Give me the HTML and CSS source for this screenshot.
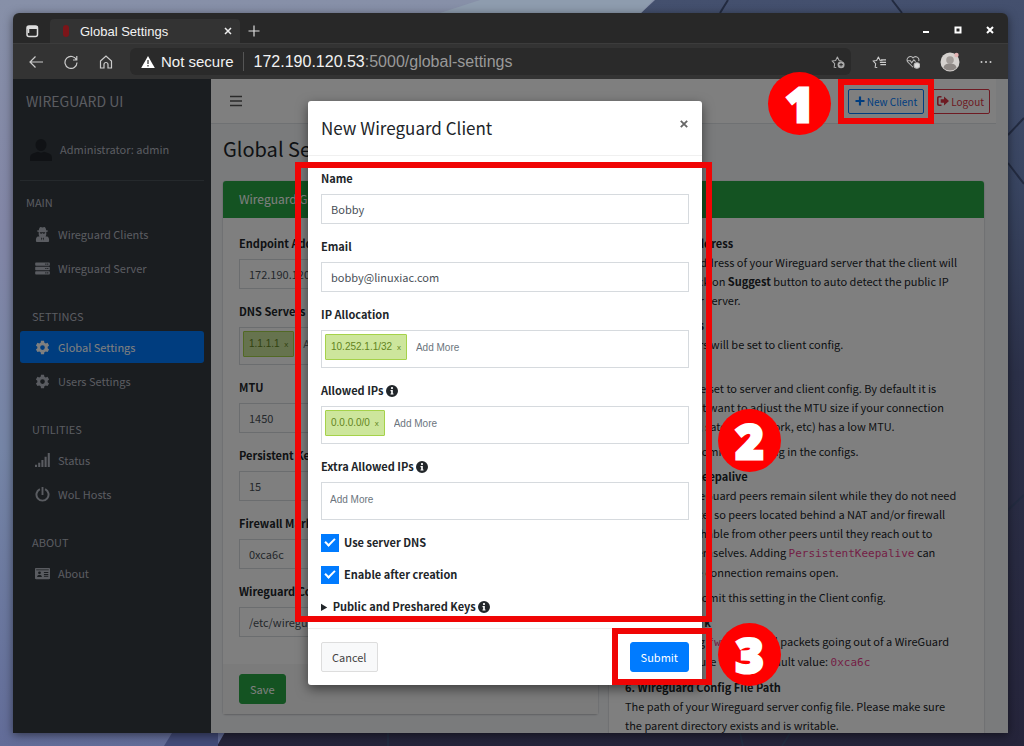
FILE: index.html
```html
<!DOCTYPE html>
<html lang="en">
<head>
<meta charset="utf-8">
<title>Global Settings</title>
<link rel="stylesheet" href="styles.css">
</head>
<body>
<svg class="defs" aria-hidden="true">
  <symbol id="cog" viewBox="0 0 16 16"><path fill-rule="evenodd" d="M6.4 0h3.2l.4 2 1.5.8 1.9-.7 1.6 2.8-1.5 1.3v1.7l1.5 1.3-1.6 2.8-1.9-.7-1.5.9-.4 2H6.4l-.4-2-1.5-.9-1.9.7L1 9.2l1.500-1.300V6.200L1 4.900l1.600-2.800 1.900.7L6 2zM8 4.700a2.500 2.500 0 1 0 0 5 2.500 2.500 0 0 0 0-5z" transform="translate(0 .9)"/></symbol>
  <symbol id="server" viewBox="0 0 16 16"><path fill-rule="evenodd" d="M1 1.500h14a.8.8 0 0 1 .8.8v2a.8.8 0 0 1-.8.8H1a.8.8 0 0 1-.8-.8v-2a.8.8 0 0 1 .8-.8zM11 2.700v1.200h1.200V2.700zm2 0v1.200h1.200V2.700zM1 6.200h14a.8.8 0 0 1 .8.8v2a.8.8 0 0 1-.8.800H1A.8.8 0 0 1 .2 9V7A.8.8 0 0 1 1 6.200zm10 1.200v1.200h1.200V7.400zm2 0v1.200h1.200V7.400zM1 10.900h14a.8.8 0 0 1 .8.800v2a.8.8 0 0 1-.8.800H1a.8.8 0 0 1-.8-.8v-2a.8.8 0 0 1 .8-.8zm10 1.200v1.200h1.200v-1.200zm2 0v1.200h1.200v-1.200z"/></symbol>
  <symbol id="secret" viewBox="0 0 16 16"><path fill-rule="evenodd" d="M6 0c.8 0 1.300.5 2 .5S9.200 0 10 0c1 0 1.600 1.800 2 3.400 1.300.2 2 .5 2 .9s-.8.700-2 1c.1 1.800.2 3-.4 3.900l-.3.8h1.800c1.200.6 1.900 1.800 1.900 3.400V15a1 1 0 0 1-1 1H2a1 1 0 0 1-1-1v-1.600c0-1.600.7-2.800 1.900-3.400h1.800l-.3-.8C3.800 8.300 3.900 7.100 4 5.300c-1.200-.3-2-.6-2-1s.8-.7 2-.9C4.400 1.800 5 0 6 0zM5 5.700c.2 1 .6 1.500 1.400 1.500S7.500 6.800 8 6.300c.5.5.8.900 1.600.9S10.800 6.700 11 5.700zM6.300 11l.8 3.500.6-2.300zm3.400 0-1.400 1.200.6 2.300z"/></symbol>
  <symbol id="signal" viewBox="0 0 16 16"><path d="M0 12.500h2.200V15H0zm3.400-2h2.200V15H3.400zm3.400-3H9V15H6.800zm3.400-3.500h2.200v11h-2.200zM13.600 0h2.200v15h-2.200z"/></symbol>
  <symbol id="power" viewBox="0 0 16 16"><path d="M7 0h2v8.500H7zM11.300 1.300A7.500 7.500 0 1 1 4.700 1.300l1 1.900a5.400 5.400 0 1 0 4.600 0z"/></symbol>
  <symbol id="card" viewBox="0 0 16 14"><path fill-rule="evenodd" d="M1.200 1h13.600c.7 0 1.200.4 1.200 1v10c0 .6-.5 1-1.200 1H1.200C.5 13 0 12.600 0 12V2c0-.6.500-1 1.200-1zM1.300 2.600v1h13.400v-1zM4.800 4.800a1.500 1.500 0 1 0 0 3 1.500 1.500 0 0 0 0-3zM2.300 10.600h5c0-1.300-.8-2-2.500-2s-2.500.7-2.500 2zM9.500 5.500v1h4.700v-1zm0 2v1h4.700v-1zm0 2v1h4.700v-1z"/></symbol>
  <symbol id="info" viewBox="0 0 16 16"><path fill-rule="evenodd" d="M8 0a8 8 0 1 1 0 16A8 8 0 0 1 8 0zm0 2.600a1.500 1.500 0 1 0 0 3 1.500 1.500 0 0 0 0-3zM6 6.600v1.600h.9v3H6v1.600h4v-1.600h-.9V6.600z"/></symbol>
  <symbol id="user" viewBox="0 0 20 20"><path d="M10 0a5 5 0 0 1 5 5.300C15 8.500 12.800 11 10 11S5 8.500 5 5.300A5 5 0 0 1 10 0zM7 11.500l3 1 3-1 4.500 1.600c1.500.6 2.500 2 2.500 4V20H0v-2.900c0-2 1-3.400 2.500-4z"/></symbol>
  <symbol id="star" viewBox="0 0 16 16"><path fill="none" stroke="currentColor" stroke-width="1.200" stroke-linejoin="round" d="M6 14.200 3.600 14l.6-4.200-3-3 4.100-.6 2-4 2 4 2.700.4"/></symbol>
</svg>
<div class="desktop">
  <svg class="wallpaper" viewBox="0 0 1024 746" preserveAspectRatio="none" aria-hidden="true">
    <defs>
      <linearGradient id="sky" x1="0" y1="0" x2="0" y2="1"><stop offset="0" stop-color="#8790a8"/><stop offset=".3" stop-color="#8286a6"/><stop offset=".6" stop-color="#7585a6"/><stop offset="1" stop-color="#626c98"/></linearGradient>
      <linearGradient id="slate" x1="0" y1="0" x2="0" y2="1"><stop offset="0" stop-color="#44506e"/><stop offset=".25" stop-color="#384460"/><stop offset=".5" stop-color="#2b3048"/><stop offset="1" stop-color="#25243a"/></linearGradient>
    </defs>
    <rect width="1024" height="746" fill="url(#slate)"/>
    <path fill="url(#sky)" d="M0 0h655l-14 13L217 746H0z"/>
    <path fill="#92a1b0" d="M480 0h173l-12 13H440z" opacity=".7"/>
    <path fill="#424b78" d="M172 733h46v13h-54z"/>
    <path fill="none" stroke="#232b40" stroke-width="2" d="M728 0l-8 13M892 0l10 13M1008 135l16-17M1008 163l16 21M1008 510l16-15M388 733v13M740 733l3 13M790 733l-8 13"/>
  </svg>
  <main class="window">
    <div class="tabstrip">
      <svg class="i14" viewBox="0 0 14 14" fill="none" stroke="#ddd" stroke-width="1.500"><rect x="2" y="2" width="10.500" height="10.500" rx="2"/><path stroke-width="3" d="M2 3.500h10.500"/><path d="M3.500 5v4"/></svg>
      <div class="tab"><i class="favicon"></i><span>Global Settings</span><button class="plain" aria-label="Close tab"><svg class="i8" viewBox="0 0 8 8" stroke="#eee" stroke-width="1.500"><path d="M1 1l6 6M7 1 1 7"/></svg></button></div>
      <button class="plain" aria-label="New tab"><svg class="i12" viewBox="0 0 12 12" stroke="#ddd" stroke-width="1.200"><path d="M6 .5v11M.5 6h11"/></svg></button>
      <div class="controls">
        <button class="plain" aria-label="Minimize"><svg class="i8" viewBox="0 0 8 8" stroke="#fff" stroke-width="2"><path d="M1 6h6"/></svg></button>
        <button class="plain" aria-label="Maximize"><svg class="i8" viewBox="0 0 8 8" stroke="#fff" stroke-width="2" fill="none"><rect x="1.500" y="1.500" width="5" height="5"/></svg></button>
        <button class="plain" aria-label="Close"><svg class="i8" viewBox="0 0 8 8" stroke="#fff" stroke-width="2"><path d="M1 1l6 6M7 1 1 7"/></svg></button>
      </div>
    </div>
    <div class="toolbar">
      <button class="plain" aria-label="Back"><svg class="i14" viewBox="0 0 14 14" fill="none" stroke="#ccc" stroke-width="1.200"><path d="M14 7H1M6.500 1.500 1 7l5.500 5.500"/></svg></button>
      <button class="plain" aria-label="Reload"><svg class="i14" viewBox="0 0 14 14" fill="none" stroke="#ccc" stroke-width="1.200"><path d="M12.500 5A6 6 0 1 0 13 7.500M12.800 1v4H9"/></svg></button>
      <button class="plain" aria-label="Home"><svg class="i14" viewBox="0 0 14 14" fill="none" stroke="#ccc" stroke-width="1.200"><path d="M1.500 6 7 1l5.500 5v7H9V9.500a2 2 0 0 0-4 0V13H1.500z"/></svg></button>
      <div class="address">
        <svg class="i14" viewBox="0 0 14 14"><path fill="#fff" d="M7 1l6.800 12H.2z"/><path stroke="#555" stroke-width="1.500" d="M7 5v4M7 10v1.500"/></svg>
        <span class="secure">Not secure</span><span class="url"><b>172.190.120.53</b>:5000/global-settings</span>
        <svg class="i14 fav" viewBox="0 0 16 16"><use href="#star"/><circle cx="11.500" cy="11" r="4" fill="#aaa"/><path stroke="#333" stroke-width="1.200" d="M11.500 9v4M9.500 11h4"/></svg>
      </div>
      <div class="tools">
        <svg class="i14" viewBox="0 0 16 16"><use href="#star"/><path stroke="#ccc" stroke-width="1.300" d="M9 8.500h7M9.500 11h6.500M10 5.500h6"/></svg>
        <svg class="i14" viewBox="0 0 16 16" fill="none" stroke="#bbb" stroke-width="1.200"><path d="M8 14 2 8a3.800 3.800 0 0 1 6-4.700A3.800 3.800 0 0 1 14.500 7M1 6.500h4l1.500 2.500L9 5.500l2 2"/><circle cx="12.500" cy="12" r="3.200" fill="#ddd"/></svg>
        <svg class="avatar" viewBox="0 0 20 20"><circle cx="10" cy="10" r="9.500" fill="#d5d1ce"/><circle cx="10" cy="8" r="3.800" fill="#a19b98"/><path fill="#8e8885" d="M3.500 16c.5-3.500 3-4.500 6.500-4.500s6 1 6.500 4.500a9.500 9.500 0 0 1-13 0z"/><circle cx="16.500" cy="3" r="2.200" fill="#e3b3b3"/></svg>
        <svg class="i12" viewBox="0 0 12 12" fill="#ccc"><circle cx="1.500" cy="6" r="1"/><circle cx="6" cy="6" r="1"/><circle cx="10.500" cy="6" r="1"/></svg>
      </div>
    </div>
    <div class="page">
      <aside class="sidebar">
        <a class="brand" href="#">WIREGUARD UI</a>
        <div class="account"><svg class="person"><use href="#user"/></svg><a href="#">Administrator: admin</a></div>
        <nav>
          <h2 class="first">MAIN</h2>
          <a href="#"><svg class="ico"><use href="#secret"/></svg>Wireguard Clients</a>
          <a href="#"><svg class="ico"><use href="#server"/></svg>Wireguard Server</a>
          <h2>SETTINGS</h2>
          <a href="#" class="active"><svg class="ico"><use href="#cog"/></svg>Global Settings</a>
          <a href="#"><svg class="ico"><use href="#cog"/></svg>Users Settings</a>
          <h2>UTILITIES</h2>
          <a href="#"><svg class="ico"><use href="#signal"/></svg>Status</a>
          <a href="#"><svg class="ico"><use href="#power"/></svg>WoL Hosts</a>
          <h2>ABOUT</h2>
          <a href="#"><svg class="ico"><use href="#card"/></svg>About</a>
        </nav>
      </aside>
      <section class="content">
        <header class="navbar">
          <button class="plain" aria-label="Menu"><svg class="i12" viewBox="0 0 12 12" stroke="#555" stroke-width="1.500"><path d="M0 1.500h12M0 6h12M0 10.500h12"/></svg></button>
          <div class="actions">
            <button class="small primary"><svg class="i10" viewBox="0 0 10 10" stroke="currentColor" stroke-width="2.200"><path d="M5 .5v9M.5 5h9"/></svg>New Client</button>
            <button class="small danger"><svg class="i12" viewBox="0 0 12 12" fill="currentColor"><path d="M4.500 1v1.600H2.200c-.4 0-.6.2-.6.6v5.600c0 .4.200.6.600.6h2.300V11H2C.8 11 0 10.200 0 9V3c0-1.200.8-2 2-2zM7 1.500 12 6l-5 4.500V7.800H3.700V4.200H7z"/></svg>Logout</button>
          </div>
        </header>
        <h1>Global Settings</h1>
        <div class="cards">
          <form class="card">
            <h3>Wireguard Global Settings</h3>
            <div class="body">
              <label for="endpoint">Endpoint Address</label>
              <input id="endpoint" value="172.190.120.53">
              <label for="dns">DNS Servers</label>
              <div class="tags"><span class="tag">1.1.1.1 <i>x</i></span><input id="dns" placeholder="Add More"></div>
              <label for="mtu">MTU</label>
              <input id="mtu" value="1450">
              <label for="keep">Persistent Keepalive</label>
              <input id="keep" value="15">
              <label for="mark">Firewall Mark</label>
              <input id="mark" value="0xca6c">
              <label for="path">Wireguard Config File Path</label>
              <input id="path" value="/etc/wireguard/wg0.conf">
            </div>
            <div class="foot"><button type="button" class="btn save">Save</button></div>
          </form>
          <article class="card">
            <h3>Help</h3>
            <dl class="body">
              <dt>1. Endpoint Address</dt>
              <dd>The public IP address of your Wireguard server that the client will connect to. Click on <b>Suggest</b> button to auto detect the public IP address of your server.</dd>
              <dt>2. DNS Servers</dt>
              <dd>The DNS servers will be set to client config.</dd>
              <dt>3. MTU</dt>
              <dd>The MTU will be set to server and client config. By default it is 1450. You might want to adjust the MTU size if your connection (e.g PPPoE, 3G, satellite network, etc) has a low MTU.</dd>
              <dd>Leave blank to omit this setting in the configs.</dd>
              <dt>4. Persistent Keepalive</dt>
              <dd>By default, WireGuard peers remain silent while they do not need to communicate, so peers located behind a NAT and/or firewall may be unreachable from other peers until they reach out to other peers themselves. Adding <code>PersistentKeepalive</code> can ensure that the connection remains open.</dd>
              <dd>Leave blank to omit this setting in the Client config.</dd>
              <dt>5. Firewall Mark</dt>
              <dd>Add a matching <code>fwmark</code> on all packets going out of a WireGuard non-default-route tunnel. Default value: <code>0xca6c</code></dd>
              <dt>6. Wireguard Config File Path</dt>
              <dd>The path of your Wireguard server config file. Please make sure the parent directory exists and is writable.</dd>
            </dl>
          </article>
        </div>
      </section>
      <div class="backdrop">
        <div class="frame frame-new"></div>
        <div class="badge badge-one">1</div>
        <form class="modal" role="dialog" aria-labelledby="title">
          <header><h2 id="title">New Wireguard Client</h2><button type="button" class="plain" aria-label="Close"><svg class="i8" viewBox="0 0 8 8" stroke="#666" stroke-width="1.800"><path d="M.8.8l6.400 6.400M7.200.8.8 7.200"/></svg></button></header>
          <div class="fields">
            <label for="name">Name</label>
            <input id="name" value="Bobby">
            <label for="email">Email</label>
            <input id="email" value="bobby@linuxiac.com">
            <label for="alloc">IP Allocation</label>
            <div class="tags"><span class="tag">10.252.1.1/32 <i>x</i></span><input id="alloc" placeholder="Add More"></div>
            <label for="allowed">Allowed IPs <svg class="i12"><use href="#info"/></svg></label>
            <div class="tags"><span class="tag">0.0.0.0/0 <i>x</i></span><input id="allowed" placeholder="Add More"></div>
            <label for="extra">Extra Allowed IPs <svg class="i12"><use href="#info"/></svg></label>
            <div class="tags"><input id="extra" placeholder="Add More"></div>
            <label class="check"><input type="checkbox" checked>Use server DNS</label>
            <label class="check"><input type="checkbox" checked>Enable after creation</label>
            <details><summary>Public and Preshared Keys <svg class="i12"><use href="#info"/></svg></summary></details>
          </div>
          <footer><button type="button" class="btn cancel">Cancel</button><button type="button" class="btn submit">Submit</button></footer>
          <div class="frame frame-fields"></div>
          <div class="frame frame-submit"></div>
          <div class="badge badge-two">2</div>
          <div class="badge badge-three">3</div>
        </form>
      </div>
    </div>
  </main>
</div>
</body>
</html>
```
FILE: styles.css
```css
* { box-sizing: border-box; }
body {
  margin: 0;
  font-family: "Noto Sans CJK SC", "Noto Sans", sans-serif;
  font-size: 11px;
  line-height: 19px;
  color: #212529;
}
h1, h2, h3, dl, dd { margin: 0; font-weight: 400; }
a { color: inherit; text-decoration: none; }
button, input { font: inherit; color: inherit; }
svg { flex: none; }
svg:not([fill]) { fill: currentColor; }
.defs { display: none; }
.i8 { width: 8px; height: 8px; }
.i10 { width: 10px; height: 10px; }
.i12 { width: 12px; height: 12px; }
.i14 { width: 14px; height: 14px; }
.plain { display: flex; padding: 0; border: 0; background: none; }

.desktop {
  position: relative;
  display: flex;
  height: 100vh;
  padding: 13px 16px 13px 13px;
  overflow: hidden;
}
.wallpaper { position: absolute; inset: 0; width: 100%; height: 100%; }
.window {
  position: relative;
  flex: 1;
  min-width: 0;
  display: flex;
  flex-direction: column;
  border-radius: 6px 6px 0 0;
  box-shadow: 0 2px 10px rgba(0, 0, 0, .5);
}
.tabstrip, .toolbar { font-family: "Liberation Sans", Arial, sans-serif; color: #f2f2f2; }
.tabstrip {
  display: flex;
  align-items: center;
  height: 30px;
  padding: 6px 0 0 12px;
  background: #282828;
  border-radius: 6px 6px 0 0;
}
.tab {
  display: flex;
  align-items: center;
  align-self: flex-end;
  width: 190px;
  height: 24px;
  margin: 0 8px 0 11px;
  padding: 0 8px 0 13px;
  border-radius: 4px 4px 0 0;
  background: #333;
  font-size: 13px;
}
.tab .plain { margin-left: auto; }
.favicon { width: 6px; height: 12px; margin-right: 11px; border-radius: 3px; background: #7c1519; }
.controls { display: flex; gap: 24px; margin: 0 14px 3px auto; }
.toolbar {
  display: flex;
  align-items: center;
  gap: 21px;
  height: 36px;
  padding: 0 16px;
  border-top: 1px solid #3c3c3c;
  background: #333;
}
.address {
  flex: 1;
  display: flex;
  align-items: center;
  height: 27px;
  margin-left: -4px;
  padding: 0 6px 0 11px;
  border-radius: 6px;
  background: #2a2a2a;
  font-size: 15px;
}
.secure { margin-left: 6px; padding-right: 9px; border-right: 1px solid #555; }
.url { margin-left: 10px; color: #999; font-size: 16px; }
.url b { font-weight: 400; color: #f2f2f2; }
.fav { margin-left: auto; color: #aaa; }
.tools { display: flex; align-items: center; gap: 20px; color: #ccc; }
.avatar { width: 20px; height: 20px; }

.page { position: relative; flex: 1; min-height: 0; display: flex; background: #f4f6f9; }
.sidebar { width: 198px; flex: none; overflow: hidden; background: #343a40; color: #b4b9c2; }
.brand { display: block; height: 45px; padding: 0 13px; font-size: 14px; line-height: 45px; }
.account {
  display: flex;
  align-items: center;
  height: 57px;
  gap: 8px;
  margin: 0 7px;
  padding: 0 10px 5px;
  border-bottom: 1px solid #4b5259;
}
.person { width: 22px; height: 24px; color: #20252a; }
nav { padding: 0 7px; }
nav h2 { padding: 21px 12px 5px; font-size: 11px; line-height: 19px; }
nav h2.first { padding: 12px 6px 6px; }
nav a {
  display: flex;
  align-items: center;
  gap: 8px;
  height: 32px;
  margin-bottom: 2px;
  padding: 0 15px;
  border-radius: 3px;
}
nav .active { background: #007bff; color: #fff; }
.ico { width: 15px; height: 15px; }

.content { flex: 1; min-width: 0; overflow: hidden; padding-right: 12px; }
.navbar {
  display: flex;
  align-items: center;
  justify-content: space-between;
  height: 45px;
  padding: 0 6px 0 19px;
  border-bottom: 1px solid #dee2e6;
  background: #fff;
}
.actions { display: flex; gap: 7px; }
.small {
  display: flex;
  align-items: center;
  gap: 2px;
  height: 25px;
  padding: 0 6px;
  border: 1px solid;
  border-radius: 2px;
  background: none;
  font-size: 10px;
}
.primary { color: #007bff; }
.danger { color: #dc3545; padding: 0 5px; }
h1 { padding: 12px 12px 20px; font-size: 20px; line-height: 25px; }
.cards { display: grid; grid-template-columns: 1fr 1fr; gap: 11px; padding: 0 12px; align-items: start; }
.card { min-width: 0; border-radius: 3px; background: #fff; box-shadow: 0 0 1px rgba(0, 0, 0, .25), 0 1px 2px rgba(0, 0, 0, .2); }
.card h3 { height: 37px; padding: 0 16px; border-radius: 3px 3px 0 0; background: #28a745; color: #fff; font-size: 12px; line-height: 36px; }
.card .body { padding: 16px; }
.card dl.body { padding-right: 24px; }
.foot { padding: 10px 16px; background: #f7f7f7; }
label { display: block; margin-bottom: 6px; font-weight: 700; }
label .i12, summary .i12 { vertical-align: -2px; }
.body > input, .fields > input, .tags {
  display: block;
  width: 100%;
  height: 30px;
  margin-bottom: 13px;
  padding: 0 9px;
  border: 1px solid #d6dade;
  background: #fff;
  color: #495057;
}
.body > input:last-child { margin-bottom: 11px; }
.tags {
  display: flex;
  align-items: flex-start;
  height: 38px;
  padding: 3px;
  font-family: "Liberation Sans", Arial, sans-serif;
  font-size: 10px;
}
.tag {
  height: 26px;
  margin-right: 4px;
  padding: 0 5px;
  border: 1px solid #a5d24a;
  border-radius: 1px;
  background: #cde69c;
  color: #638421;
  line-height: 24px;
  white-space: nowrap;
}
.tag i { font-style: normal; font-size: 8px; margin-left: 2px; }
.tags input { flex: 1; min-width: 0; height: 26px; padding: 0 5px; border: 0; background: none; }
.tags ::placeholder { color: #6c757d; }
dd { margin-bottom: 6px; }
dt { font-weight: 700; }
code { font-family: "DejaVu Sans Mono", monospace; font-size: 11px; color: #e83e8c; }

.btn { height: 30px; padding: 0 10px; border: 1px solid; border-radius: 3px; }
.save { background: #28a745; border-color: #28a745; color: #fff; }
.cancel { background: #f8f9fa; border-color: #ddd; color: #444; border-radius: 2px; }
.submit { background: #007bff; border-color: #007bff; color: #fff; }

.backdrop {
  position: absolute;
  inset: 0;
  display: flex;
  justify-content: center;
  align-items: flex-start;
  padding: 22px 11px 0 0;
  background: rgba(0, 0, 0, .5);
}
.modal {
  position: relative;
  width: 394px;
  border-radius: 3px;
  background: #fff;
  box-shadow: 0 4px 12px rgba(0, 0, 0, .5);
}
.modal header {
  display: flex;
  justify-content: space-between;
  padding: 13px 14px 13px 13px;
  border-bottom: 1px solid #f0f0f0;
}
.modal header h2 { font-size: 17px; line-height: 28px; }
.modal header .plain { margin-top: 6px; }
.fields { padding: 13px 13px 12px; }
.modal .check { display: flex; align-items: center; gap: 5px; height: 19px; margin-bottom: 13px; }
.check input {
  appearance: none;
  display: grid;
  place-items: center;
  width: 18px;
  height: 18px;
  margin: 0;
  background: #007bff;
}
.check input::before {
  content: "";
  width: 8px;
  height: 4px;
  margin-bottom: 3px;
  border: solid #fff;
  border-width: 0 0 2px 2px;
  rotate: -45deg;
}
summary { font-weight: 700; }
.modal footer { display: flex; justify-content: space-between; padding: 13px; border-top: 1px solid #eee; }
.frame { position: absolute; border: 6px solid #f00505; }
.frame-new { top: 0; right: 74px; width: 96px; height: 45px; }
.frame-fields { inset: 61px -10px 63px -13px; }
.frame-submit { right: -10px; bottom: 0; width: 100px; height: 57px; }
.badge {
  position: absolute;
  display: grid;
  place-items: center;
  width: 63px;
  height: 63px;
  border-radius: 50%;
  background: #f00;
  color: #fff;
  font-family: "Open Sans", sans-serif;
  font-size: 48px;
  font-weight: 800;
  line-height: 63px;
  -webkit-text-stroke: 3px #fff;
  stroke-linejoin: round;
}
.badge-one { top: -7px; right: 177px; }
.badge-two { top: 308px; right: -79px; }
.badge-three { bottom: -1px; right: -79px; }
```
